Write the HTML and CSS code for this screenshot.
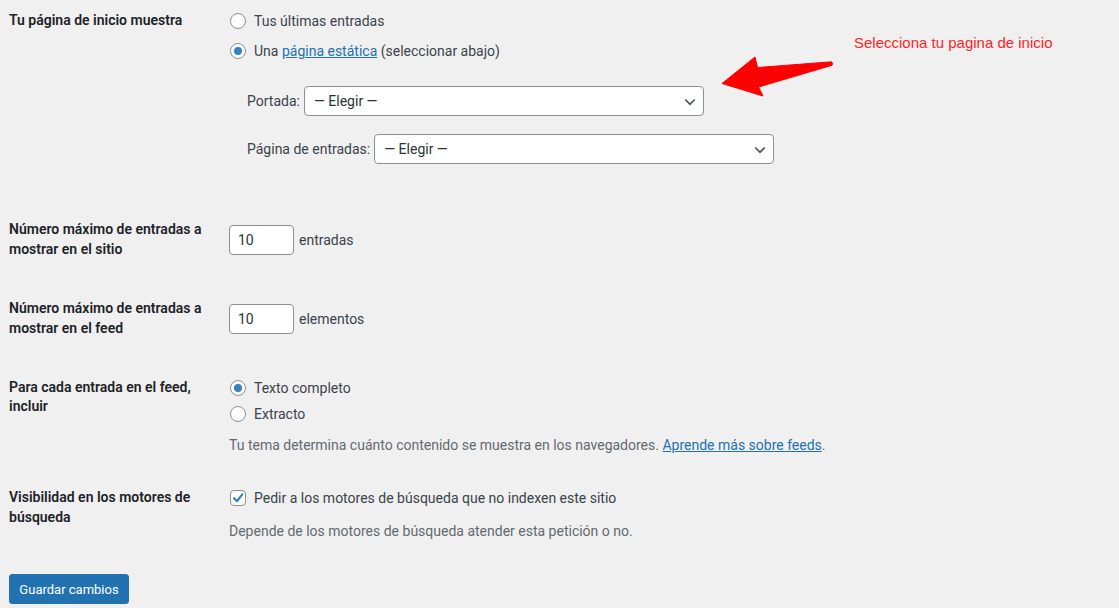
FILE: index.html
```html
<!DOCTYPE html>
<html lang="es">
<head>
<meta charset="utf-8">
<title>Ajustes de lectura</title>
<link rel="stylesheet" href="styles.css">
</head>
<body>
<main class="page">
  <form class="settings">
    <div class="row row-front">
      <div class="label">Tu página de inicio muestra</div>
      <div class="field">
        <div class="choice"><span class="radio"></span><span>Tus últimas entradas</span></div>
        <div class="choice gap-10"><span class="radio checked"></span><span>Una <a href="#" class="link">página estática</a> (seleccionar abajo)</span></div>
        <ul class="pages">
          <li class="page-item"><span class="sel-label">Portada:</span><span class="select"><span>— Elegir —</span><svg class="chev" width="12" height="8" viewBox="0 0 12 8"><polyline points="1.2,1.5 6,6.2 10.8,1.5" fill="none" stroke="#50575e" stroke-width="1.7"/></svg></span></li>
          <li class="page-item"><span class="sel-label">Página de entradas:</span><span class="select"><span>— Elegir —</span><svg class="chev" width="12" height="8" viewBox="0 0 12 8"><polyline points="1.2,1.5 6,6.2 10.8,1.5" fill="none" stroke="#50575e" stroke-width="1.7"/></svg></span></li>
        </ul>
      </div>
    </div>

    <div class="row row-center row-posts">
      <div class="label">Número máximo de entradas a mostrar en el sitio</div>
      <div class="field inline"><span class="num">10</span><span>entradas</span></div>
    </div>

    <div class="row row-center row-feed">
      <div class="label">Número máximo de entradas a mostrar en el feed</div>
      <div class="field inline"><span class="num">10</span><span>elementos</span></div>
    </div>

    <div class="row row-include">
      <div class="label">Para cada entrada en el feed, incluir</div>
      <div class="field">
        <div class="choice"><span class="radio checked"></span><span>Texto completo</span></div>
        <div class="choice gap-6"><span class="radio"></span><span>Extracto</span></div>
        <p class="desc">Tu tema determina cuánto contenido se muestra en los navegadores. <a href="#" class="link">Aprende más sobre feeds</a>.</p>
      </div>
    </div>

    <div class="row row-visibility">
      <div class="label">Visibilidad en los motores de búsqueda</div>
      <div class="field">
        <div class="choice"><span class="checkbox"><svg width="14" height="14" viewBox="0 0 14 14"><path d="M3 7.2 L5.9 10.2 L11.3 3.4" fill="none" stroke="#3582c4" stroke-width="2.2" stroke-linecap="round" stroke-linejoin="round"/></svg></span><span>Pedir a los motores de búsqueda que no indexen este sitio</span></div>
        <p class="desc desc-vis">Depende de los motores de búsqueda atender esta petición o no.</p>
      </div>
    </div>

    <div class="actions"><button type="button" class="btn">Guardar cambios</button></div>
  </form>

  <div class="annotation">
    <svg class="arrow" width="122" height="50" viewBox="0 0 122 50"><path d="M7 33.5 L40 7 L42.5 17.5 L116.5 11.8 Q118.5 13.3 117 15.3 L43.5 37 L48 46 Z" fill="#ff0000" stroke="#ff0000" stroke-width="1" stroke-linejoin="round"/></svg>
    <span class="note">Selecciona tu pagina de inicio</span>
  </div>
</main>
</body>
</html>
```

FILE: styles.css
```css
* { box-sizing: border-box; }

html, body {
  margin: 0;
  padding: 0;
  background: #f0f0f1;
}

body {
  font-family: Roboto, "Noto Sans", Arial, sans-serif;
  font-size: 14px;
  color: #3c434a;
}

.page {
  position: relative;
  width: 1119px;
  height: 608px;
  padding: 11px 0 0 9px;
  overflow: hidden;
}

.settings {
  display: flex;
  flex-direction: column;
}

.row {
  display: grid;
  grid-template-columns: 220px 1fr;
  align-items: start;
}

.row-center { align-items: center; }

.row-posts { margin-top: 56px; }
.row-feed { margin-top: 40px; }
.row-include { margin-top: 40px; }
.row-visibility { margin-top: 33px; }

.label {
  width: 200px;
  font-weight: 600;
  color: #1d2327;
  line-height: 19.5px;
}

.row-include .label { line-height: 18.5px; }

.field {
  display: flex;
  flex-direction: column;
  align-items: flex-start;
  line-height: 20px;
}

.field.inline {
  flex-direction: row;
  align-items: center;
  gap: 5px;
}

.choice {
  display: flex;
  align-items: center;
  height: 20px;
  gap: 8px;
  padding-left: 1px;
}

.gap-10 { margin-top: 10px; }
.gap-6 { margin-top: 6px; }

.radio {
  width: 16px;
  height: 16px;
  border-radius: 50%;
  border: 1px solid #8c8f94;
  background: #fff;
  display: flex;
  align-items: center;
  justify-content: center;
  flex: none;
}

.radio.checked::before {
  content: "";
  width: 8px;
  height: 8px;
  border-radius: 50%;
  background: #3582c4;
}

.checkbox {
  width: 16px;
  height: 16px;
  border-radius: 4px;
  border: 1px solid #8c8f94;
  background: #fff;
  display: flex;
  align-items: center;
  justify-content: center;
  flex: none;
}

.link {
  color: #2271b1;
  text-decoration: underline;
}

.pages {
  list-style: none;
  margin: 25px 0 0 18px;
  padding: 0;
  display: flex;
  flex-direction: column;
  gap: 18px;
}

.page-item {
  display: flex;
  align-items: center;
  gap: 4px;
  height: 30px;
}

.select {
  width: 400px;
  height: 30px;
  background: #fff;
  border: 1px solid #8c8f94;
  border-radius: 4px;
  display: flex;
  align-items: center;
  justify-content: space-between;
  padding: 0 7px 0 9px;
  color: #2c3338;
}

.chev { margin-top: 1px; }

.num {
  width: 65px;
  height: 30px;
  background: #fff;
  border: 1px solid #8c8f94;
  border-radius: 4px;
  display: flex;
  align-items: center;
  padding-left: 8px;
  color: #2c3338;
}

.desc {
  margin: 11px 0 0 0;
  color: #646970;
  line-height: 20px;
}

.desc-vis { margin-top: 13px; }

.actions { margin-top: 33px; }

.btn {
  width: 120px;
  height: 30px;
  background: #2271b1;
  border: 1px solid #2271b1;
  border-radius: 3px;
  color: #fff;
  font-family: inherit;
  font-size: 13px;
  padding: 0;
  cursor: pointer;
}

.annotation {
  position: absolute;
  left: 715px;
  top: 34px;
  width: 404px;
  height: 70px;
}

.arrow {
  position: absolute;
  left: 0;
  top: 16px;
}

.note {
  position: absolute;
  left: 139px;
  top: 0;
  font-family: "Liberation Sans", Arial, sans-serif;
  font-size: 15px;
  line-height: 18px;
  color: #ff1f1f;
  white-space: nowrap;
}
```
